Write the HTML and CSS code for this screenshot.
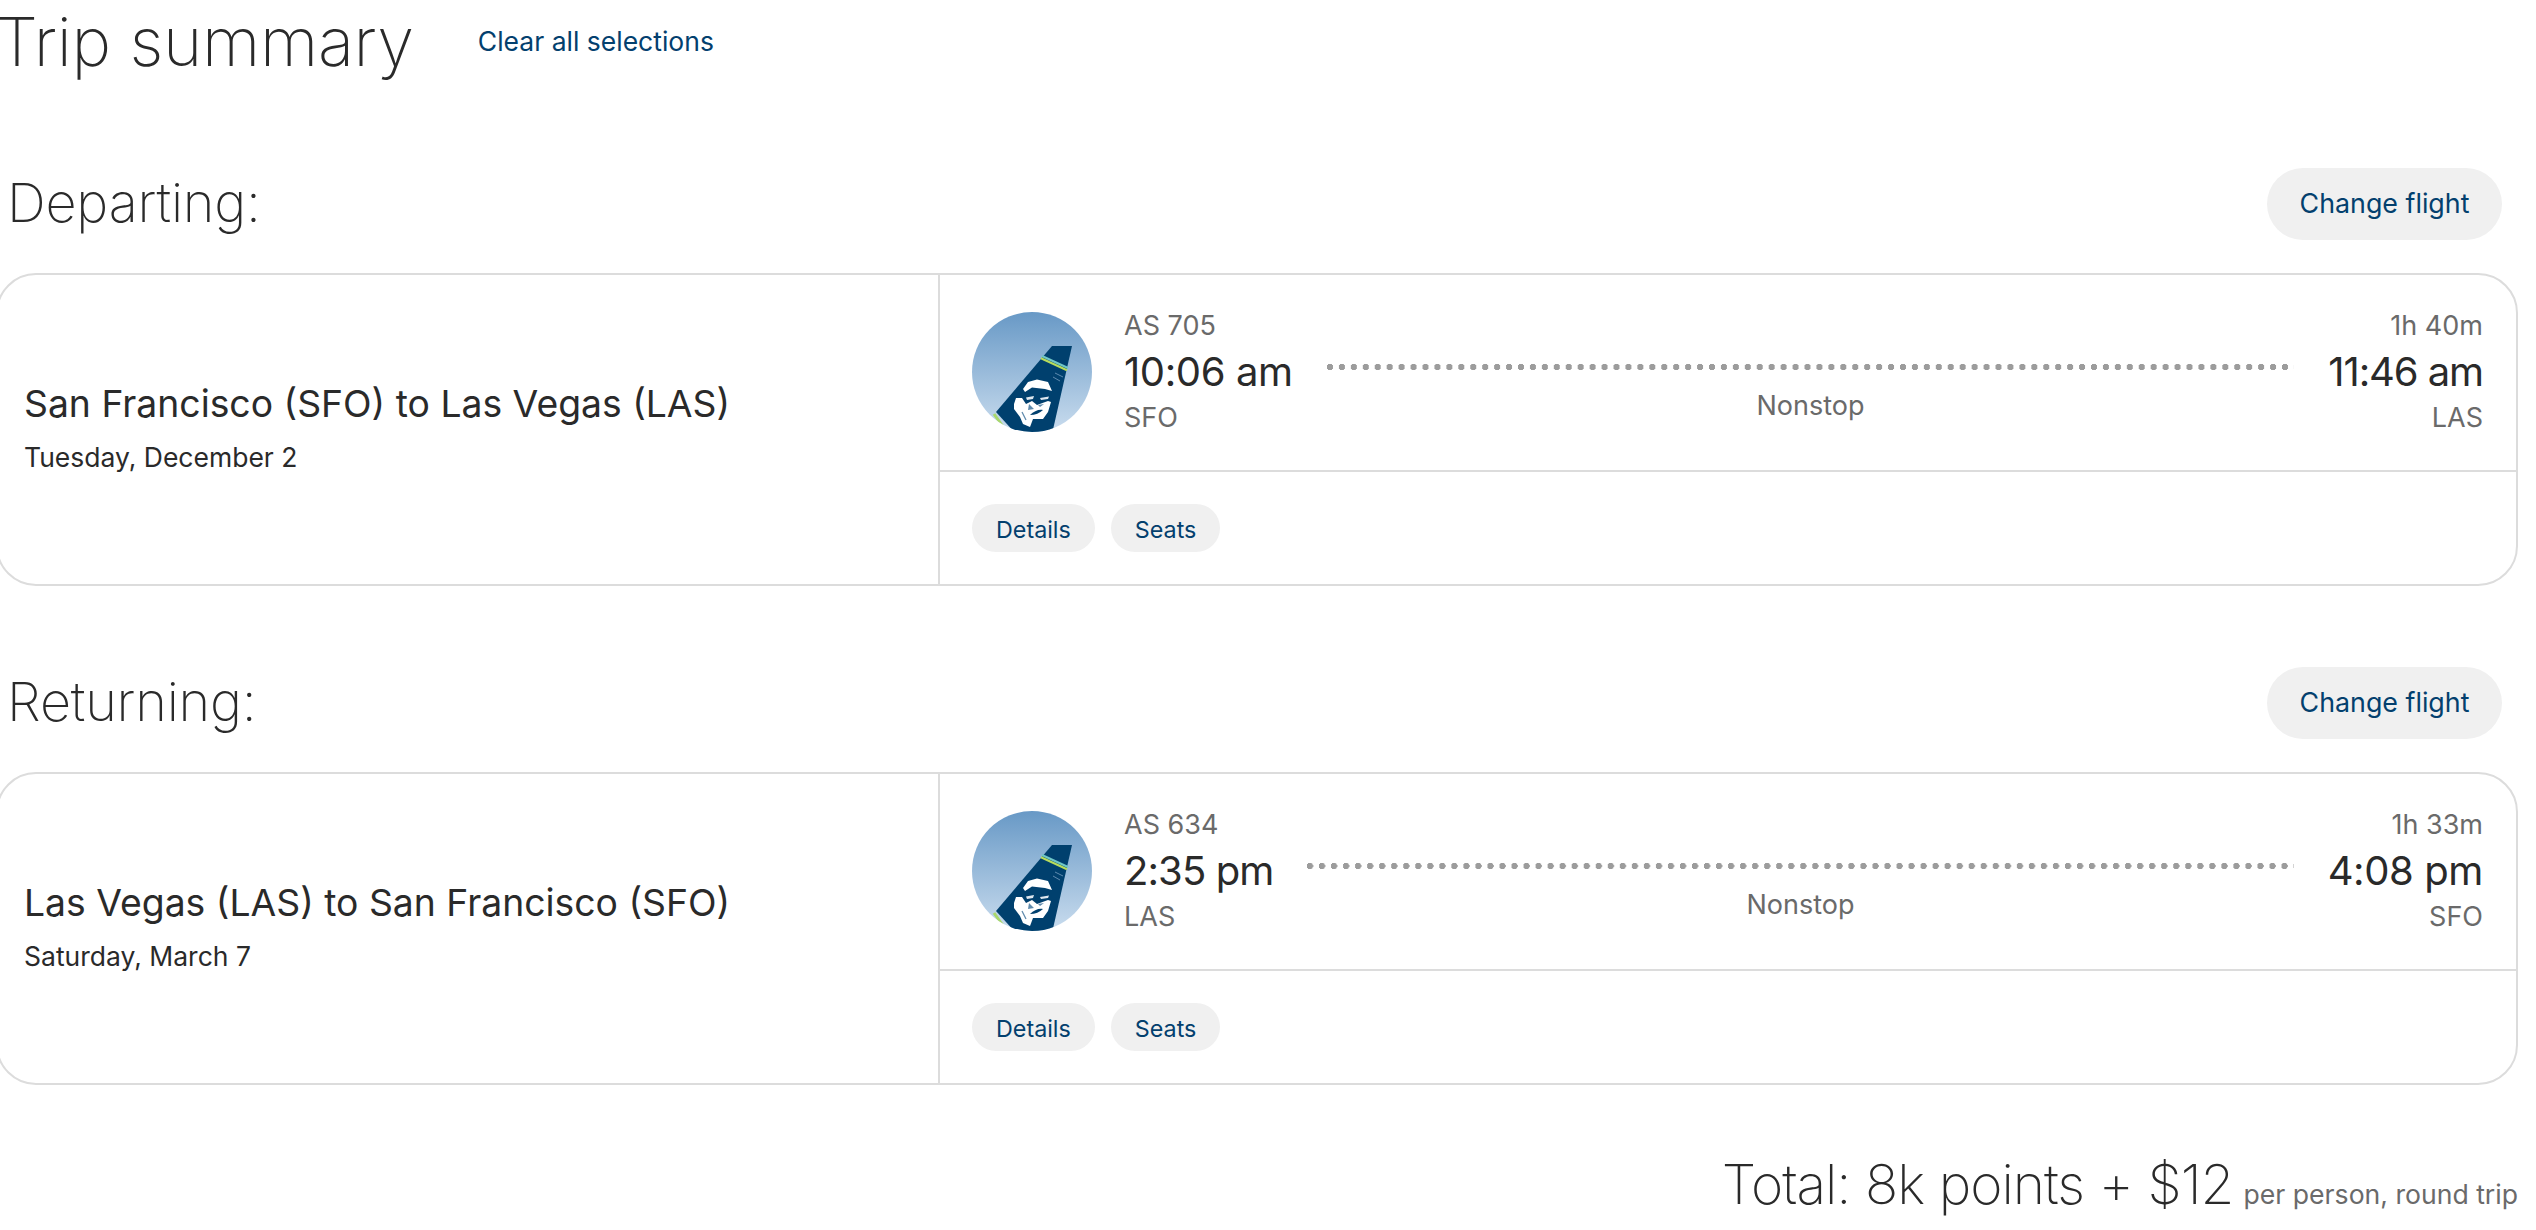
FILE: index.html
```html
<!DOCTYPE html>
<html lang="en">
<head>
<meta charset="utf-8">
<title>Trip summary</title>
<link rel="stylesheet" href="styles.css">
</head>
<body>
<svg class="sprite" aria-hidden="true">
  <defs>
    <linearGradient id="sky" x1="0" y1="0" x2="0" y2="1"><stop offset="0" stop-color="#6899c6"/><stop offset="1" stop-color="#c9dcee"/></linearGradient>
    <clipPath id="disc"><circle cx="60" cy="60" r="60"/></clipPath>
    <filter id="soft" x="-5%" y="-5%" width="110%" height="110%"><feGaussianBlur stdDeviation="0.5"/></filter>
    <symbol id="tail" viewBox="0 0 120 120">
      <circle cx="60" cy="60" r="60" fill="url(#sky)"/>
      <g clip-path="url(#disc)">
        <g filter="url(#soft)">
          <path d="M80 34H100L80 122H44L24 100Z" fill="#03406e"/>
          <path d="M70 44L96 56" stroke="#6fc8c8" stroke-width="2" fill="none"/>
          <path d="M69 46.200L95 58.200" stroke="#b7dc5c" stroke-width="2.200" fill="none"/>
          <path d="M22 102L32 116" stroke="#a9d86a" stroke-width="3" fill="none"/>
          <path d="M83 61L91 65M81 65L88 69" stroke="#5d8bb0" stroke-width="1" fill="none"/>
          <path d="M51 77L56 70L65 67.500L76 70L80 79L73 77L60 75.500L53 80Z" fill="#fff"/>
          <path d="M42 92L44 86L50 86L54 92L60 89L65 93L76 89L79 90L76 100L71 107L61 107L58 115L51 112L48 105L42 97Z" fill="#fff"/>
          <path d="M50 81L62 78L67 82L80 80L79 83L67 85L61 82L52 84Z" fill="#03406e"/>
          <path d="M54 85.500L62 84L61 87L55 88ZM68 86L77 84.500L76 87L69 88Z" fill="#dfe8ef"/>
          <path d="M58 103C62 99 67 97 71 98C68 101 63 103 58 103Z" fill="#03406e"/>
          <path d="M57 92L62 97L56 98ZM66 93L72 92L68 95Z" fill="#5f8aac"/>
          <path d="M50 100L54 108" stroke="#5f8aac" stroke-width="1.200" fill="none"/>
        </g>
      </g>
    </symbol>
  </defs>
</svg>
<main class="page">
  <header class="top">
    <h1 class="title">Trip summary</h1>
    <a class="clear">Clear all selections</a>
  </header>

  <section class="leg">
    <div class="leg-head">
      <h2 class="leg-title">Departing:</h2>
      <button class="change">Change flight</button>
    </div>
    <div class="card">
      <div class="route">
        <div class="route-name">San Francisco (SFO) to Las Vegas (LAS)</div>
        <div class="route-date">Tuesday, December 2</div>
      </div>
      <div class="info">
        <div class="flight">
          <svg class="logo"><use href="#tail"/></svg>
          <div class="side">
            <div class="meta">AS 705</div>
            <div class="time">10:06 am</div>
            <div class="meta">SFO</div>
          </div>
          <div class="path"><div class="dots"></div><div class="stops">Nonstop</div></div>
          <div class="side end">
            <div class="meta">1h 40m</div>
            <div class="time time-ones">11:46 am</div>
            <div class="meta">LAS</div>
          </div>
        </div>
        <div class="actions"><button class="pill">Details</button><button class="pill">Seats</button></div>
      </div>
    </div>
  </section>

  <section class="leg">
    <div class="leg-head">
      <h2 class="leg-title">Returning:</h2>
      <button class="change">Change flight</button>
    </div>
    <div class="card">
      <div class="route">
        <div class="route-name">Las Vegas (LAS) to San Francisco (SFO)</div>
        <div class="route-date">Saturday, March 7</div>
      </div>
      <div class="info">
        <div class="flight">
          <svg class="logo"><use href="#tail"/></svg>
          <div class="side">
            <div class="meta">AS 634</div>
            <div class="time time-narrow">2:35 pm</div>
            <div class="meta">LAS</div>
          </div>
          <div class="path"><div class="dots"></div><div class="stops">Nonstop</div></div>
          <div class="side end">
            <div class="meta">1h 33m</div>
            <div class="time">4:08 pm</div>
            <div class="meta">SFO</div>
          </div>
        </div>
        <div class="actions"><button class="pill">Details</button><button class="pill">Seats</button></div>
      </div>
    </div>
  </section>

  <footer class="total">
    <span class="total-price">Total: 8k points + $12</span>
    <span class="total-note">per person, round trip</span>
  </footer>
</main>
</body>
</html>
```

FILE: styles.css
```css
* { box-sizing: border-box; }
html, body { margin: 0; padding: 0; background: #fff; overflow: hidden; }
body { width: 2536px; height: 1230px; font-family: "Inter", "Lato", sans-serif; color: #2a2a2a; }
.sprite { position: absolute; width: 0; height: 0; }
.page { width: 2522px; margin-left: -4px; }
.top { display: flex; align-items: center; height: 84px; }
.title { margin: 0; font-size: 67px; font-weight: 250; line-height: 84px; letter-spacing: -0.3px; }
.clear { margin-left: 64px; margin-bottom: 2px; font-size: 26.500px; color: #03406e; }
.leg { margin-top: 84px; }
.leg + .leg { margin-top: 81px; }
.leg-head { display: flex; justify-content: space-between; align-items: center; height: 72px; padding: 0 16px 0 11px; }
.leg-title { margin: 0 0 3px; font-size: 54px; font-weight: 250; letter-spacing: -0.2px; }
.change { height: 72px; width: 235px; padding: 0 0 2px; border: 0; border-radius: 36px; background: #f0f0f0; color: #03406e; font: 26.800px "Inter", sans-serif; }
.card { display: flex; height: 313px; margin-top: 33px; border: 2px solid #dcdcdc; border-radius: 40px; }
.route { width: 942px; padding: 0 0 5px 26px; border-right: 2px solid #dcdcdc; display: flex; flex-direction: column; justify-content: center; }
.route-name { font-size: 37.300px; }
.route-date { margin-top: 15px; font-size: 26.500px; }
.info { flex: 1; display: flex; flex-direction: column; }
.flight { height: 197px; display: flex; align-items: center; padding: 0 33px 2px 32px; border-bottom: 2px solid #dcdcdc; }
.logo { width: 120px; height: 120px; flex: none; align-self: flex-start; margin: 37px 32px 0 0; }
.side { flex: none; }
.end { text-align: right; }
.meta { font-size: 27px; line-height: 36px; color: #6a6a6a; }
.time { font-size: 40px; line-height: 56px; letter-spacing: -0.4px; }
.time-ones { letter-spacing: -1.100px; }
.time-narrow { letter-spacing: -0.900px; }
.path { flex: 1; align-self: flex-start; margin: 0 34px; padding-top: 89px; text-align: center; }
.dots { height: 6px; background: radial-gradient(circle at 3px 3px, #9c9c9c 3px, transparent 3.4px) 0 0 / 12px 6px round; }
.stops { margin-top: 18px; font-size: 27px; line-height: 36px; color: #6a6a6a; }
.actions { display: flex; gap: 16px; padding: 32px; }
.pill { height: 48px; padding: 2px 24px 0; border: 0; border-radius: 24px; background: #f0f0f0; color: #03406e; font: 23.300px "Inter", sans-serif; }
.total { display: flex; justify-content: flex-end; align-items: baseline; gap: 10px; margin-top: 66px; }
.total-price { font-size: 55px; font-weight: 250; letter-spacing: -1px; }
.total-note { font-size: 26.600px; color: #6a6a6a; }
```
